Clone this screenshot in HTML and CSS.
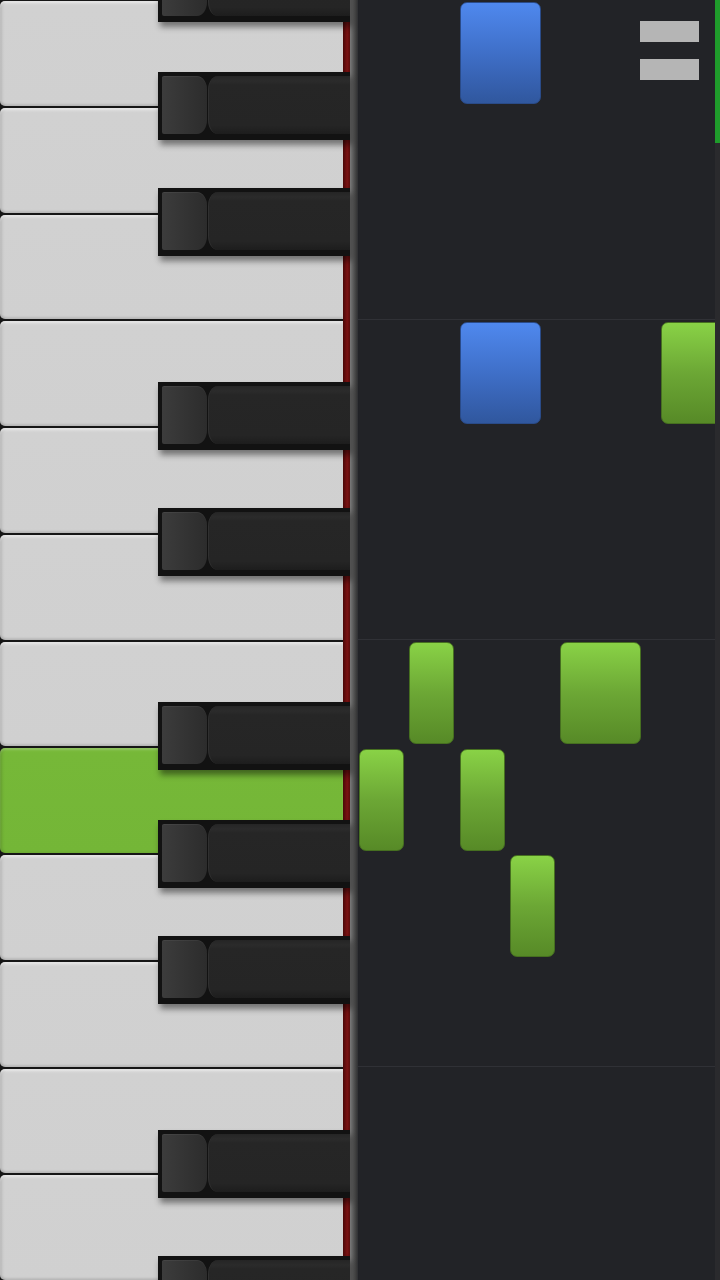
FILE: index.html
```html
<!DOCTYPE html>
<html lang="en">
<head>
  <meta charset="UTF-8">
  <meta name="viewport" content="width=720, initial-scale=1.0">
  <title>Piano Roll</title>
  <link rel="stylesheet" href="styles.css">
</head>
<body>
  <div class="app">
    <div class="keyboard">
      <div class="keys">
        <div class="whites">
          <div class="white"></div>
          <div class="white"></div>
          <div class="white"></div>
          <div class="white"></div>
          <div class="white"></div>
          <div class="white"></div>
          <div class="white"></div>
          <div class="white on"></div>
          <div class="white"></div>
          <div class="white"></div>
          <div class="white"></div>
          <div class="white"></div>
        </div>
        <div class="felt"></div>

        <!-- black keys sit over the white ones -->
        <div class="black" style="top: -46px"><div class="cap"></div><div class="body"></div></div>
        <div class="black" style="top: 72px"><div class="cap"></div><div class="body"></div></div>
        <div class="black" style="top: 188px"><div class="cap"></div><div class="body"></div></div>
        <div class="black" style="top: 382px"><div class="cap"></div><div class="body"></div></div>
        <div class="black" style="top: 508px"><div class="cap"></div><div class="body"></div></div>
        <div class="black" style="top: 702px"><div class="cap"></div><div class="body"></div></div>
        <div class="black" style="top: 820px"><div class="cap"></div><div class="body"></div></div>
        <div class="black" style="top: 936px"><div class="cap"></div><div class="body"></div></div>
        <div class="black" style="top: 1130px"><div class="cap"></div><div class="body"></div></div>
        <div class="black" style="top: 1256px"><div class="cap"></div><div class="body"></div></div>
      </div>
      <div class="rail"></div>
    </div>

    <div class="roll">
      <div class="bar-line" style="grid-row: 4"></div>
      <div class="bar-line" style="grid-row: 7"></div>
      <div class="bar-line" style="grid-row: 11"></div>

      <div class="note blue long" style="grid-area: 1 / 3"></div>
      <div class="note blue long" style="grid-area: 4 / 3"></div>
      <div class="note green long" style="grid-area: 4 / 7"></div>
      <div class="note green" style="grid-area: 7 / 2"></div>
      <div class="note green long" style="grid-area: 7 / 5"></div>
      <div class="note green" style="grid-area: 8 / 1"></div>
      <div class="note green" style="grid-area: 8 / 3"></div>
      <div class="note green" style="grid-area: 9 / 4"></div>
    </div>

    <div class="scroll">
      <div class="thumb"></div>
    </div>

    <div class="menu">
      <span></span>
      <span></span>
    </div>
  </div>
</body>
</html>
```

FILE: styles.css
```css
body {
  margin: 0;
  padding: 0;
  background-color: #222327;
  font-family: 'Liberation Sans', Arial, sans-serif;
}
.app {
  position: relative;
  width: 720px;
  height: 1280px;
  display: flex;
  overflow: hidden;
  background-color: #222327;
}

/* keyboard */
.keyboard {
  display: flex;
  width: 358px;
  height: 100%;
  flex-shrink: 0;
}
.keys {
  position: relative;
  display: flex;
  width: 350px;
  height: 100%;
}
.whites {
  width: 343px;
  height: 100%;
  display: flex;
  flex-direction: column;
  gap: 2px;
  padding-top: 1px;
  box-sizing: border-box;
  background-color: #161616;
}
.white {
  flex: 1;
  border-radius: 5px 0 0 5px;
  background: linear-gradient(to bottom, #dadada 0, #d1d1d1 5px, #d0d0d0 100%);
  box-shadow: inset 0 2px 2px rgba(255, 255, 255, 0.45), inset 2px 0 3px rgba(0, 0, 0, 0.12), inset 0 -2px 2px rgba(0, 0, 0, 0.08);
}
.white.on {
  background: linear-gradient(to bottom, #7cbd3e 0, #76b838 5px, #74b637 100%);
  box-shadow: inset 0 2px 2px rgba(255, 255, 255, 0.2), inset 2px 0 3px rgba(0, 0, 0, 0.15);
}
.felt {
  width: 7px;
  height: 100%;
  background: linear-gradient(to right, #4a0808, #7a1212 60%, #5a0b0b);
}
.rail {
  width: 8px;
  height: 100%;
  background: linear-gradient(to right, #7a7a7a, #5a5a5a 40%, #3c3c3c 80%, #2e2f33);
}
.black {
  position: absolute;
  left: 158px;
  width: 192px;
  height: 68px;
  box-sizing: border-box;
  display: flex;
  padding: 4px 0 6px 4px;
  background-color: #121212;
  box-shadow: 2px 5px 6px rgba(0, 0, 0, 0.45);
}
.black .cap {
  width: 45px;
  height: 100%;
  border-radius: 2px 10px 10px 2px / 2px 14px 14px 2px;
  background: linear-gradient(to right, #3c3c3c, #333333 55%, #2c2c2c);
  box-shadow: inset 0 1px 0 rgba(255, 255, 255, 0.05);
}
.black .body {
  flex: 1;
  height: 100%;
  margin-left: 1px;
  border-left: 1px solid #303030;
  border-radius: 10px 0 0 10px / 14px 0 0 14px;
  background: linear-gradient(to bottom, #252525 0, #2b2b2b 5px, #262626 9px, #252525 85%, #1d1d1d 100%);
}

/* note grid */
.roll {
  flex: 1;
  height: 100%;
  display: grid;
  grid-template-rows: repeat(12, 106.667px);
  grid-template-columns: repeat(8, 50.33px);
  padding-left: 1px;
  overflow: hidden;
}
.bar-line {
  grid-column: 1 / -1;
  align-self: start;
  height: 1px;
  margin-top: -1px;
  margin-left: -1px;
  width: 400px;
  background-color: #303136;
}
.note {
  margin-top: 2px;
  width: 45px;
  height: 102px;
  box-sizing: border-box;
  border-radius: 7px;
}
.note.long {
  width: 81px;
}
.green {
  background: linear-gradient(to bottom, #89d246, #6ca735 50%, #578a27);
  border: 1px solid #466f20;
}
.blue {
  background: linear-gradient(to bottom, #4f88ee, #3f6fc8 50%, #30579e);
  border: 1px solid #2a4b88;
}

/* scroll bar on the right edge */
.scroll {
  width: 5px;
  height: 100%;
  flex-shrink: 0;
  background-color: #2a2a2d;
}
.thumb {
  height: 143px;
  background-color: #1f9b2b;
}

.menu {
  position: absolute;
  top: 21px;
  left: 640px;
  display: flex;
  flex-direction: column;
  gap: 17px;
}
.menu span {
  display: block;
  width: 59px;
  height: 21px;
  background-color: #b5b5b5;
}
```
